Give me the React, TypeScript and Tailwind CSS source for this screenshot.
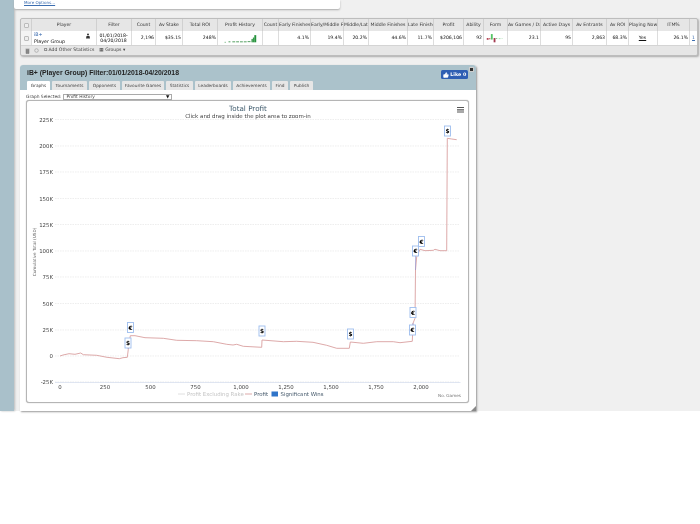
import { ThumbsUp } from "lucide-react";

const cols: [string, number, string][] = [
  ["Player", 65, ""],
  ["Filter", 35, ""],
  ["Count", 24, "2,196"],
  ["Av Stake", 27, "$35.15"],
  ["Total ROI", 35, "248%"],
  ["Profit History", 45, ""],
  ["Count", 16, ""],
  ["Early Finishes", 32, "4.1%"],
  ["Early/Middle Finishes", 33, "19.4%"],
  ["Middle/Late", 25, "20.2%"],
  ["Middle Finishes", 39, "44.6%"],
  ["Late Finishes", 26, "11.7%"],
  ["Profit", 30, "$206,106"],
  ["Ability", 20, "92"],
  ["Form", 24, ""],
  ["Av Games / Day", 33, "23.1"],
  ["Active Days", 32, "95"],
  ["Av Entrants", 34, "2,863"],
  ["Av ROI", 22, "68.3%"],
  ["Playing Now", 29, ""],
  ["ITM%", 32, "26.1%"],
];

const tabs: [string, number][] = [
  ["Graphs", 23],
  ["Tournaments", 35],
  ["Opponents", 31],
  ["Favourite Games", 42],
  ["Statistics", 27],
  ["Leaderboards", 36],
  ["Achievements", 37],
  ["Find", 16],
  ["Publish", 23],
];

const yTicks: [string, number][] = [
  ["225K", 119.5], ["200K", 146], ["175K", 172], ["150K", 198.5], ["125K", 224.5],
  ["100K", 251], ["75K", 277], ["50K", 303.5], ["25K", 330], ["0", 356], ["-25K", 382],
];
const xTicks: [string, number][] = [
  ["0", 60], ["250", 105], ["500", 150.5], ["750", 195.5], ["1,000", 241],
  ["1,250", 286], ["1,500", 331], ["1,750", 376], ["2,000", 421],
];
const flags: [string, number, number][] = [
  ["€", 127.5, 322.5], ["$", 125, 338], ["$", 259, 326], ["$", 347.5, 329],
  ["€", 410, 307.5], ["€", 409.5, 325], ["€", 418.5, 236.5], ["€", 412.5, 246], ["$", 444.5, 126],
];
const profit =
  "60,356 63,355 69,353.7 75,354.3 80.7,353 83.3,354.7 96.7,355.3 107,357.3 119.3,358.7 123,357.7 127.3,357.3 128.3,349.3 130.3,335.7 135,335.7 145,337.7 163.3,338.3 176.7,340.3 196.7,340.7 213.3,341.7 226.7,344.3 233,345 236.7,344.3 243.3,346.3 261.7,347.3 262,340 283.3,341.7 296.7,341.3 313,342.3 326.7,345.3 336.7,348.3 349.3,348.3 350.3,342 363.3,343.3 376.7,341.7 393.3,341.7 400,342.7 412.3,341.3 413,323.3 415,318.3 415.5,270 416.7,256.7 420,249.3 425,250.7 433.3,250.3 435,249.3 440,250.7 446.7,250.7 447.3,138.3 451.7,139 456.7,139.7";

function Chart() {
  return (
    <svg viewBox="27 101 441 301" className="block w-full h-full" fontFamily="'DejaVu Sans', sans-serif">
      {yTicks.map(([t, y]) => (
        <g key={t}>
          <line x1="55" x2="460" y1={y} y2={y} stroke="#e2e2e2" strokeWidth="0.6" strokeDasharray="1.5 1" />
          <text x="53" y={y + 2} textAnchor="end" fontSize="5.4" fill="#444">{t}</text>
        </g>
      ))}
      <line x1="55" x2="460.5" y1="382.5" y2="382.5" stroke="#ccd6eb" strokeWidth="0.6" />
      {xTicks.map(([t, x]) => (
        <text key={t} x={x} y="389" textAnchor="middle" fontSize="5.4" fill="#444">{t}</text>
      ))}
      <text x="248" y="111" textAnchor="middle" fontSize="7.2" fill="#3e5a6c">Total Profit</text>
      <text x="248" y="117.5" textAnchor="middle" fontSize="5.5" fill="#444">Click and drag inside the plot area to zoom-in</text>
      <text transform="translate(36 252) rotate(-90)" textAnchor="middle" fontSize="4.2" fill="#666">Cumulative Total (USD)</text>
      <path d="M457 107.5h7M457 109.8h7M457 112h7" stroke="#555" strokeWidth="1.2" />
      <polyline points={profit} fill="none" stroke="#d99f9f" strokeWidth="0.9" />
      <path d="M415.5 270 L415.5 256 M128 349 L128 348 M413 323 L413 335" stroke="#8a8fd0" strokeWidth="0.6" fill="none" />
      {flags.map(([c, x, y], i) => (
        <g key={i}>
          <rect x={x} y={y} width="6" height="10" fill="#fff" stroke="#9dbdee" strokeWidth="0.9" />
          <text x={x + 3} y={y + 7} textAnchor="middle" fontSize="5.8" fontWeight="700" fill="#000">{c}</text>
        </g>
      ))}
      <path d="M178 394h7" stroke="#dcdcdc" strokeWidth="0.9" />
      <text x="187" y="396" fontSize="5.4" fill="#c4c4c4">Profit Excluding Rake</text>
      <path d="M245 394h7" stroke="#d99f9f" strokeWidth="0.9" />
      <text x="254" y="396" fontSize="5.4" fill="#44586a">Profit</text>
      <rect x="271.5" y="391.5" width="6.5" height="5" fill="#2f74c9" />
      <text x="280.5" y="396" fontSize="5.4" fill="#44586a">Significant Wins</text>
      <text x="461" y="397" textAnchor="end" fontSize="4.2" fill="#777">No. Games</text>
    </svg>
  );
}

function Spark() {
  return (
    <svg width="45" height="14" viewBox="0 0 45 14" className="block">
      <path d="M7 11.5h1M11 11h2M15 11h3M19 11h3M23 11h3M27 11h3M31 10.8h3" stroke="#4f9c5c" strokeWidth="1" />
      <rect x="35" y="8" width="1.5" height="3.5" fill="#3f9a50" />
      <rect x="36.5" y="6.5" width="1.5" height="5" fill="#359a4a" />
      <rect x="38" y="4" width="2" height="7.5" fill="#23913a" />
    </svg>
  );
}

function Form() {
  return (
    <svg width="24" height="14" viewBox="0 0 24 14" className="block">
      <rect x="3" y="7" width="2" height="2" fill="#b5485a" />
      <rect x="5.5" y="7" width="1.5" height="1.5" fill="#c77" />
      <rect x="7.5" y="2.7" width="2" height="6" fill="#55c465" />
      <rect x="10.5" y="7" width="2" height="4.7" fill="#a33b50" />
      <rect x="13" y="7" width="1.5" height="1" fill="#7cc98a" />
      <rect x="16" y="7.2" width="2" height="1" fill="#a7dcae" />
      <rect x="19" y="7.2" width="1.5" height="0.8" fill="#c5e8ca" />
    </svg>
  );
}

export default function App() {
  return (
    <div className="w-[700px] h-[524px] bg-white overflow-hidden font-['DejaVu_Sans',sans-serif] blur-[0.3px]">
      <div className="flex h-[411px] bg-[#f0f0f0]">
        <div className="w-[14px] shrink-0 bg-[#a9c0ca] shadow-[1px_0_2px_#bbb]" />
        <div className="flex-1 min-w-0">
          <div className="w-[326px] h-[9px] bg-white rounded-b-[2px] shadow-[0_1px_2px_#aaa] pl-[10px] text-[4.1px] leading-[5px] text-[#3b6db0] underline">
            More Options...
          </div>

          <div className="ml-[6px] mt-[9px] w-[678px] h-[38px] rounded-[2px] border border-[#bdbdbd] bg-[#e6e6e6] shadow-[1px_1px_2px_#aaa] text-[4.6px] text-[#333]">
            <div className="flex h-[12px] items-center">
              <div className="w-[11px] flex justify-center border-r border-[#d0d0d0] h-full items-center">
                <div className="w-[5px] h-[5px] border border-[#bbb] bg-[#eee] rounded-[1px]" />
              </div>
              {cols.map(([h, w], i) => (
                <div
                  key={i}
                  style={{ width: w }}
                  className="h-full shrink-0 overflow-hidden whitespace-nowrap text-center leading-[11px] border-r border-[#d0d0d0]"
                >
                  {h}
                </div>
              ))}
            </div>
            <div className="flex h-[14px] bg-white items-stretch">
              <div className="w-[11px] flex justify-center items-center border-r border-[#ddd] bg-[#f4f4f4]">
                <div className="w-[5px] h-[5px] border border-[#bbb] bg-[#eee] rounded-[1px]" />
              </div>
              {cols.map(([h, w, v], i) => (
                <div
                  key={i}
                  style={{ width: w }}
                  className="shrink-0 border-r border-[#ddd] flex items-center justify-end pr-[1px] text-[#111] whitespace-nowrap overflow-hidden"
                >
                  {i === 0 ? (
                    <div className="relative w-full h-full pl-[2px] leading-[6px] text-[4.8px]">
                      <div className="text-[#2f62aa] pt-[1px]">iB+</div>
                      <div className="pt-[1px]">Player Group</div>
                      <svg className="absolute right-[4px] top-[2px]" width="6" height="6" viewBox="0 0 6 6">
                        <path d="M3 0.5a1 1 0 0 1 1 1 1 1 0 0 1-2 0 1 1 0 0 1 1-1zM1 5.5l.5-2.5h3l.5 2.5z" fill="#333" />
                      </svg>
                    </div>
                  ) : i === 1 ? (
                    <div className="w-full text-center leading-[5.5px]">01/01/2018-<br />04/20/2018</div>
                  ) : i === 5 ? (
                    <Spark />
                  ) : i === 14 ? (
                    <Form />
                  ) : i === 19 ? (
                    <div className="w-full text-center underline">Yes</div>
                  ) : (
                    v
                  )}
                </div>
              ))}
              <div className="flex-1 flex items-center justify-center text-[#3b6db0] underline">1</div>
            </div>
            <div className="flex h-[10px] items-center gap-[4px] pl-[4px] text-[#444] border-t border-[#d4d4d4]">
              <svg width="5" height="6" viewBox="0 0 5 6"><path d="M1 1.5h3v4H1zM.5 1h4" fill="#888" stroke="#777" strokeWidth="0.5" /></svg>
              <svg width="5" height="5" viewBox="0 0 5 5"><circle cx="2.5" cy="2.5" r="1.8" fill="none" stroke="#999" strokeWidth="0.6" /></svg>
              <span className="ml-[1px]">⧉ Add Other Statistics</span>
              <span className="ml-[1px]">▦ Groups ▾</span>
            </div>
          </div>

          <div className="ml-[6px] mt-[9px] w-[456px] h-[346px] bg-white rounded-t-[3px] shadow-[1px_1px_2px_#999] relative flex flex-col">
            <div className="h-[25px] bg-[#abc2cb] rounded-t-[3px] relative flex flex-col justify-between shrink-0">
              <div className="pl-[7px] pt-[4px] text-[6.85px] leading-[8px] font-bold text-[#222] font-['Liberation_Sans',sans-serif] whitespace-nowrap">
                iB+ (Player Group) Filter:01/01/2018-04/20/2018
              </div>
              <div className="flex gap-[2px] pl-[7px]">
                {tabs.map(([t, w], i) => (
                  <div
                    key={t}
                    style={{ width: w }}
                    className={`h-[9px] shrink-0 text-center text-[4.3px] leading-[9px] whitespace-nowrap rounded-t-[1px] text-[#444] ${i === 0 ? "bg-white" : "bg-[#e6e6e6]"}`}
                  >
                    {t}
                  </div>
                ))}
              </div>
              <div className="absolute right-[8px] top-[5px] h-[9px] w-[27px] rounded-[1.5px] bg-[#2f5fb3] text-white text-[4.8px] font-bold flex items-center justify-center gap-[1.5px] whitespace-nowrap">
                <ThumbsUp size={6} fill="#fff" strokeWidth={1.5} />
                <span>Like 0</span>
              </div>
              <div className="absolute right-[2px] top-[2px] w-[5px] h-[5px] bg-[#333] border border-[#ccc]" />
            </div>
            <div className="h-[10px] flex items-end pl-[6px] pb-[0.5px] text-[4.4px] text-[#444] shrink-0">
              <span className="leading-[6px]">Graph Selected:</span>
              <div className="ml-[2px] w-[109px] h-[5.5px] border border-[#aaa] leading-[3.5px] pl-[2px] flex justify-between pr-[2px]">
                <span>Profit History</span>
                <span className="text-[#111]">▼</span>
              </div>
            </div>
            <div className="ml-[6px] w-[443px] h-[303px] bg-white border border-[#b5b5b5] rounded-[3px] shadow-[0_0_1px_#999] overflow-hidden shrink-0">
              <Chart />
            </div>
            <svg className="absolute right-0 bottom-0" width="5" height="5" viewBox="0 0 5 5">
              <path d="M5 0v5H0z" fill="#888" />
            </svg>
          </div>
        </div>
      </div>
    </div>
  );
}
